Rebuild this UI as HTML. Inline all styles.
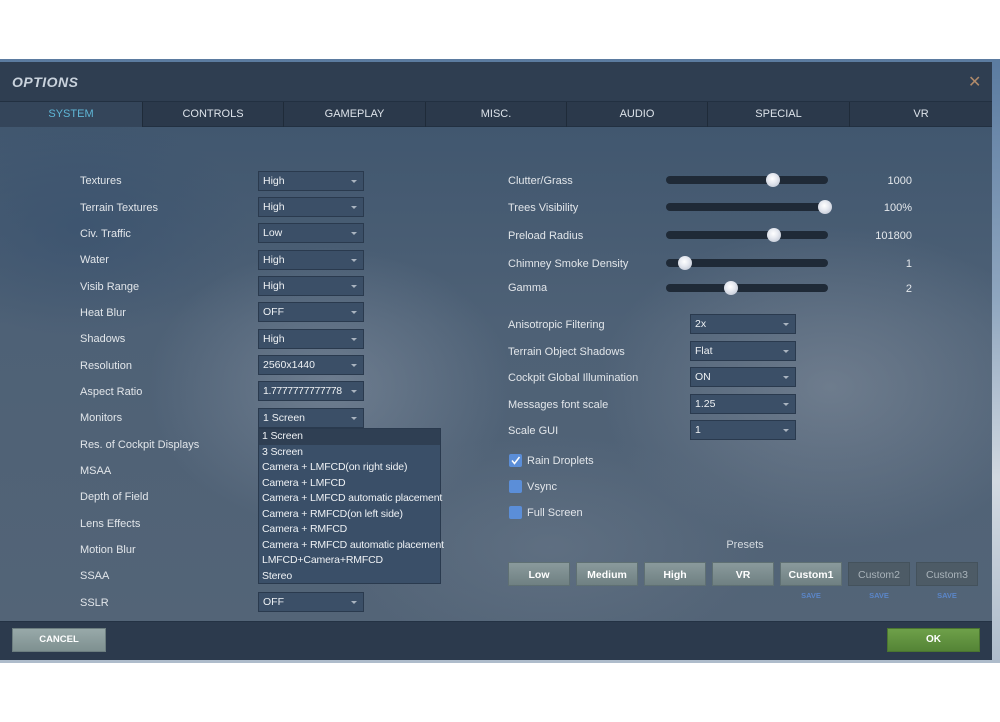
<!DOCTYPE html>
<html><head><meta charset="utf-8"><style>
*{margin:0;padding:0;box-sizing:border-box}
body{width:1000px;height:722px;background:#fff;position:relative;overflow:hidden;font-family:"Liberation Sans","DejaVu Sans",sans-serif;font-size:11px;color:#e4e8ec}
.a{position:absolute;white-space:nowrap}
#sky{left:0;top:59px;width:1000px;height:604px;background:linear-gradient(180deg,#5b7ba0 0,#8fa6bf 40%,#d2d9e1 70%,#aebccb 100%)}
#dlg{left:0;top:62px;width:992px;height:598px;background:#2f3e51}
#title{left:12px;top:74px;font-size:14px;font-weight:bold;font-style:italic;color:#c9d2dc;letter-spacing:.5px}
#x{left:968px;top:72px;color:#b08a6a;font-size:16px}
#tabs{left:0;top:101px;width:992px;height:26px;background:#2b394b;border-top:1px solid #223041;border-bottom:1px solid #223041}
.tab{top:0;height:25px;line-height:25px;text-align:center;font-size:11px;color:#dde3ea;border-right:1px solid #1f2b39}
#content{left:0;top:127px;width:992px;height:494px;
background:
radial-gradient(ellipse 260px 200px at 330px 260px,rgba(140,152,168,.5),transparent 70%),
radial-gradient(ellipse 330px 230px at 830px 260px,rgba(140,150,164,.5),transparent 70%),
radial-gradient(ellipse 300px 160px at 550px 420px,rgba(110,125,142,.45),transparent 70%),
radial-gradient(ellipse 240px 160px at 80px 100px,rgba(55,80,110,.6),transparent 70%),
linear-gradient(180deg,#41576f 0,#4e6176 40%,#536477 100%)}
#foot{left:0;top:621px;width:992px;height:39px;background:#2c3a4d;border-top:1px solid #243244}
.lbl{left:80px;font-size:11px;color:#e2e6ea}
.dd{width:106px;height:20px;background:#3b4f67;border:1px solid #2a3a4e;padding-left:4px;line-height:18px;color:#eef1f4;font-size:10.5px;overflow:hidden}
.dd:after{content:"";position:absolute;right:6px;top:8px;border-left:3px solid transparent;border-right:3px solid transparent;border-top:3px solid #aab4c0}
.trk{left:666px;width:162px;height:8px;border-radius:4px;background:#1f2a37}
.kn{width:14px;height:14px;border-radius:50%;background:radial-gradient(circle at 45% 40%,#fff 0,#e6e9f0 40%,#b4bccb 100%)}
.val{width:80px;text-align:right;left:832px}
.cb{left:509px;width:13px;height:13px;background:#5b8ed8;border-radius:2px}
.btn{top:562px;width:62px;height:24px;background:linear-gradient(#8a9a9c,#6f8082);color:#fff;font-weight:bold;text-align:center;line-height:24px;font-size:10.5px;border:1px solid #5f7073}
.btn.d{background:#4d5b66;color:#a9b3ba;font-weight:normal;border-color:#44525c}
.save{top:591px;width:62px;text-align:center;font-size:7.5px;font-weight:bold;color:#5b86c8}
#list{left:258px;top:428px;width:183px;height:156px;background:#3a4f68;border:1px solid #2a3a4e}
#list div{height:15.5px;line-height:15.5px;padding-left:3px;font-size:10.5px;letter-spacing:-.15px;color:#eef1f4;white-space:nowrap}
</style></head><body>
<div class="a" id="sky"></div>
<div class="a" id="dlg"></div>
<div class="a" id="title">OPTIONS</div>
<div class="a" id="x">✕</div>
<div class="a" id="tabs">
<div class="a tab" style="left:0;width:143px;background:#34455a;color:#5fb6d6">SYSTEM</div>
<div class="a tab" style="left:143px;width:141px">CONTROLS</div>
<div class="a tab" style="left:284px;width:142px">GAMEPLAY</div>
<div class="a tab" style="left:426px;width:141px">MISC.</div>
<div class="a tab" style="left:567px;width:141px">AUDIO</div>
<div class="a tab" style="left:708px;width:142px">SPECIAL</div>
<div class="a tab" style="left:850px;width:142px;border-right:none">VR</div>
</div>
<div class="a" id="content"></div>
<div class="a" id="foot"></div>

<div class="a lbl" style="top:175px">Textures</div>
<div class="a lbl" style="top:202px">Terrain Textures</div>
<div class="a lbl" style="top:228px">Civ. Traffic</div>
<div class="a lbl" style="top:254px">Water</div>
<div class="a lbl" style="top:281px">Visib Range</div>
<div class="a lbl" style="top:307px">Heat Blur</div>
<div class="a lbl" style="top:333px">Shadows</div>
<div class="a lbl" style="top:360px">Resolution</div>
<div class="a lbl" style="top:386px">Aspect Ratio</div>
<div class="a lbl" style="top:412px">Monitors</div>
<div class="a lbl" style="top:439px">Res. of Cockpit Displays</div>
<div class="a lbl" style="top:465px">MSAA</div>
<div class="a lbl" style="top:491px">Depth of Field</div>
<div class="a lbl" style="top:518px">Lens Effects</div>
<div class="a lbl" style="top:544px">Motion Blur</div>
<div class="a lbl" style="top:570px">SSAA</div>
<div class="a lbl" style="top:597px">SSLR</div>

<div class="a dd" style="left:258px;top:171px">High</div>
<div class="a dd" style="left:258px;top:197px">High</div>
<div class="a dd" style="left:258px;top:223px">Low</div>
<div class="a dd" style="left:258px;top:250px">High</div>
<div class="a dd" style="left:258px;top:276px">High</div>
<div class="a dd" style="left:258px;top:302px">OFF</div>
<div class="a dd" style="left:258px;top:329px">High</div>
<div class="a dd" style="left:258px;top:355px">2560x1440</div>
<div class="a dd" style="left:258px;top:381px;letter-spacing:-.4px">1.7777777777778</div>
<div class="a dd" style="left:258px;top:408px">1 Screen</div>
<div class="a dd" style="left:258px;top:592px">OFF</div>
<div class="a" id="list">
<div style="background:#2f3f53">1 Screen</div><div>3 Screen</div><div>Camera + LMFCD(on right side)</div><div>Camera + LMFCD</div><div>Camera + LMFCD automatic placement</div><div>Camera + RMFCD(on left side)</div><div>Camera + RMFCD</div><div>Camera + RMFCD automatic placement</div><div>LMFCD+Camera+RMFCD</div><div>Stereo</div>
</div>

<div class="a lbl" style="left:508px;top:175px">Clutter/Grass</div>
<div class="a lbl" style="left:508px;top:202px">Trees Visibility</div>
<div class="a lbl" style="left:508px;top:230px">Preload Radius</div>
<div class="a lbl" style="left:508px;top:258px">Chimney Smoke Density</div>
<div class="a lbl" style="left:508px;top:282px">Gamma</div>
<div class="a trk" style="top:176px"></div><div class="a kn" style="left:766px;top:173px"></div><div class="a val" style="top:175px">1000</div>
<div class="a trk" style="top:203px"></div><div class="a kn" style="left:818px;top:200px"></div><div class="a val" style="top:202px">100%</div>
<div class="a trk" style="top:231px"></div><div class="a kn" style="left:767px;top:228px"></div><div class="a val" style="top:230px">101800</div>
<div class="a trk" style="top:259px"></div><div class="a kn" style="left:678px;top:256px"></div><div class="a val" style="top:258px">1</div>
<div class="a trk" style="top:284px"></div><div class="a kn" style="left:724px;top:281px"></div><div class="a val" style="top:283px">2</div>

<div class="a lbl" style="left:508px;top:319px">Anisotropic Filtering</div>
<div class="a lbl" style="left:508px;top:346px">Terrain Object Shadows</div>
<div class="a lbl" style="left:508px;top:372px">Cockpit Global Illumination</div>
<div class="a lbl" style="left:508px;top:399px">Messages font scale</div>
<div class="a lbl" style="left:508px;top:425px">Scale GUI</div>
<div class="a dd" style="left:690px;top:314px">2x</div>
<div class="a dd" style="left:690px;top:341px">Flat</div>
<div class="a dd" style="left:690px;top:367px">ON</div>
<div class="a dd" style="left:690px;top:394px">1.25</div>
<div class="a dd" style="left:690px;top:420px">1</div>

<div class="a cb" style="top:454px"><svg width="13" height="13" viewBox="0 0 13 13"><path d="M3 6.5 L5.5 9.5 L10.5 3" stroke="#fff" stroke-width="1.5" fill="none"/></svg></div>
<div class="a lbl" style="left:527px;top:455px">Rain Droplets</div>
<div class="a cb" style="top:480px"></div>
<div class="a lbl" style="left:527px;top:481px">Vsync</div>
<div class="a cb" style="top:506px"></div>
<div class="a lbl" style="left:527px;top:507px">Full Screen</div>

<div class="a" style="left:705px;top:539px;width:80px;text-align:center;color:#d5dbe1">Presets</div>
<div class="a btn" style="left:508px">Low</div>
<div class="a btn" style="left:576px">Medium</div>
<div class="a btn" style="left:644px">High</div>
<div class="a btn" style="left:712px">VR</div>
<div class="a btn" style="left:780px">Custom1</div>
<div class="a btn d" style="left:848px">Custom2</div>
<div class="a btn d" style="left:916px">Custom3</div>
<div class="a save" style="left:780px">SAVE</div>
<div class="a save" style="left:848px">SAVE</div>
<div class="a save" style="left:916px">SAVE</div>

<div class="a" style="left:12px;top:628px;width:94px;height:24px;background:linear-gradient(#98a9a9,#7e9090);border:1px solid #6c7d7f;color:#fff;font-weight:bold;font-size:9.5px;text-align:center;line-height:22px">CANCEL</div>
<div class="a" style="left:887px;top:628px;width:93px;height:24px;background:linear-gradient(#6ea049,#548436);border:1px solid #4a7530;color:#fff;font-weight:bold;font-size:10px;text-align:center;line-height:22px">OK</div>
</body></html>
